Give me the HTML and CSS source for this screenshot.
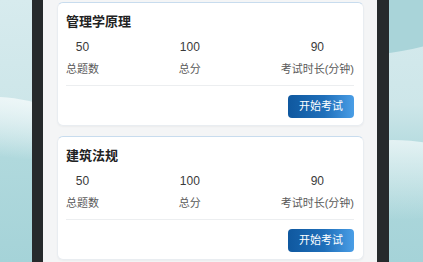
FILE: index.html
```html
<!DOCTYPE html>
<html lang="zh">
<head>
<meta charset="utf-8">
<link rel="stylesheet" href="styles.css">
</head>
<body>
<div class="bg">
  <div class="wave wave-l"></div>
  <div class="wave wave-r"></div>
  <div class="wave wave-r2"></div>
</div>
<div class="phone">
  <div class="screen">
    <div class="card">
      <div class="title">管理学原理</div>
      <div class="stats">
        <div class="stat"><div class="num">50</div><div class="label">总题数</div></div>
        <div class="stat"><div class="num">100</div><div class="label">总分</div></div>
        <div class="stat"><div class="num">90</div><div class="label">考试时长(分钟)</div></div>
      </div>
      <div class="divider"></div>
      <div class="actions"><button class="btn">开始考试</button></div>
    </div>
    <div class="card">
      <div class="title">建筑法规</div>
      <div class="stats">
        <div class="stat"><div class="num">50</div><div class="label">总题数</div></div>
        <div class="stat"><div class="num">100</div><div class="label">总分</div></div>
        <div class="stat"><div class="num">90</div><div class="label">考试时长(分钟)</div></div>
      </div>
      <div class="divider"></div>
      <div class="actions"><button class="btn">开始考试</button></div>
    </div>
  </div>
</div>
</body>
</html>
```

FILE: styles.css
```css
* { box-sizing: border-box; }
html, body {
  margin: 0;
  padding: 0;
  width: 423px;
  height: 262px;
  overflow: hidden;
}
body {
  font-family: "Liberation Sans", "Noto Sans CJK SC", sans-serif;
  background: linear-gradient(180deg, #d7ebee 0%, #cde6e9 40%, #b0d9dd 60%, #a5d3d8 100%);
  position: relative;
}
.bg {
  position: absolute;
  inset: 0;
  overflow: hidden;
}
.wave {
  position: absolute;
  border-radius: 50%;
}
.wave-l {
  left: -60px;
  top: 98px;
  width: 140px;
  height: 60px;
  background: linear-gradient(180deg, rgba(240,248,249,0.9), rgba(190,225,229,0));
  transform: rotate(8deg);
}
.wave-r {
  right: -90px;
  top: -40px;
  width: 220px;
  height: 90px;
  background: #a9d4d9;
  transform: rotate(-12deg);
}
.wave-r2 {
  right: -60px;
  top: 140px;
  width: 180px;
  height: 80px;
  background: linear-gradient(180deg, rgba(232,244,245,0.9), rgba(180,220,225,0));
}
.phone {
  position: relative;
  margin-left: 32px;
  width: 357px;
  height: 262px;
  border-left: 11px solid #262a2c;
  border-right: 12px solid #262a2c;
  background: #f4f5f6;
}
.screen {
  padding: 2px 13px 0 14px;
  display: flex;
  flex-direction: column;
  gap: 10px;
}
.card {
  width: 307px;
  height: 124px;
  background: #fff;
  border: 1px solid #e9edf1;
  border-top: 1px solid #c8dcee;
  border-radius: 6px;
  padding: 10px 9px 0 8px;
  box-shadow: 0 1px 2px rgba(0,0,0,0.04);
}
.title {
  font-size: 13px;
  font-weight: bold;
  color: #222;
  line-height: 18px;
}
.stats {
  display: flex;
  justify-content: space-between;
  margin-top: 8px;
}
.stat {
  display: flex;
  flex-direction: column;
  align-items: center;
  gap: 6px;
}
.num {
  font-size: 12px;
  color: #3a3a3a;
  line-height: 16px;
}
.label {
  font-size: 11px;
  color: #5a5a5a;
  line-height: 16px;
}
.divider {
  height: 1px;
  background: #eceef0;
  margin-top: 8px;
}
.actions {
  display: flex;
  justify-content: flex-end;
  margin-top: 9px;
}
.btn {
  width: 66px;
  height: 23px;
  border: none;
  border-radius: 4px;
  background: linear-gradient(90deg, #0f589f 0%, #1f6fba 55%, #4a9ee6 100%);
  color: #fff;
  font-family: "Liberation Sans", "Noto Sans CJK SC", sans-serif;
  font-size: 11px;
  padding: 0;
  line-height: 23px;
}
```
